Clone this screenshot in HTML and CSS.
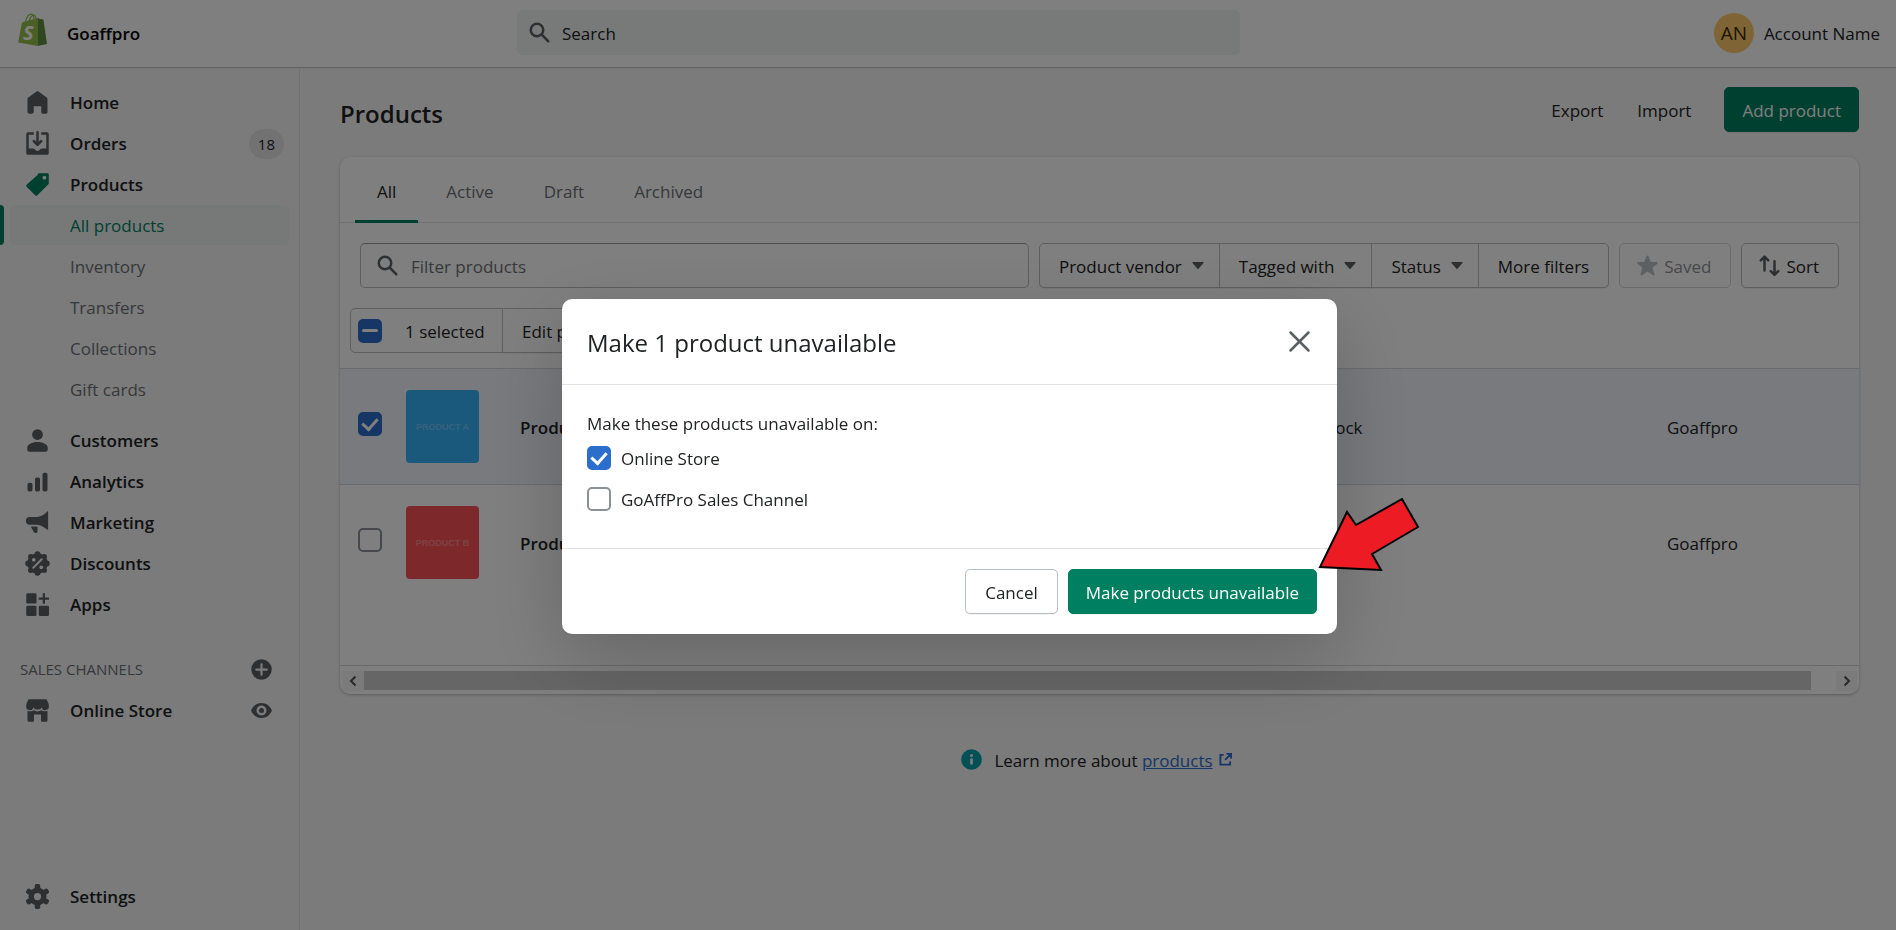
FILE: index.html
```html
<!DOCTYPE html>
<html lang="en">
<head>
<meta charset="utf-8">
<meta name="viewport" content="width=device-width, initial-scale=1">
<title>Products</title>
<link rel="stylesheet" href="styles.css">
</head>
<body>
<svg class="sprite" aria-hidden="true">
  <symbol id="i-search" viewBox="0 0 20 20"><path d="M8 12a4 4 0 110-8 4 4 0 010 8zm9.707 4.293l-4.820-4.820A5.968 5.968 0 0014 8 6 6 0 002 8a6 6 0 006 6 5.968 5.968 0 003.473-1.113l4.820 4.820a.997.997 0 001.414 0 .999.999 0 000-1.414z"/></symbol>
  <symbol id="i-caret" viewBox="0 0 12 7"><path d="M1 0h10a.6.6 0 01.5 1L6.500 6.700a.7.7 0 01-1 0L.5 1A.6.6 0 011 0z"/></symbol>
</svg>

<header class="topbar">
  <a class="brand" href="#">
    <svg class="brand-logo" viewBox="0 0 30 34" aria-hidden="true">
      <path d="M7.500 9C8.500 4.500 11 1.200 13.500 1.200S16 5 16 8M11 8.500C12 4 14.500 1.800 16 2.200s2 2.500 2 5" fill="none" stroke="#95bf47" stroke-width="1.200"/>
      <path d="M3.900 9.600L19.500 5v28L.2 29.600z" fill="#95bf47"/>
      <path d="M19.500 4.700L22 6l3.400.4L29 31l-9.500 2z" fill="#5e8e3e"/>
      <text x="5" y="27" class="brand-letter">S</text>
    </svg>
    <span>Goaffpro</span>
  </a>
  <label class="global-search">
    <svg class="icon" aria-hidden="true"><use href="#i-search"/></svg>
    <input type="search" placeholder="Search" aria-label="Search">
  </label>
  <button class="account" type="button"><span class="avatar">AN</span><span>Account Name</span></button>
</header>

<div class="frame">
  <nav class="sidebar" aria-label="Main">
    <ul class="nav">
      <li><a class="nav-link" href="#"><svg class="icon" viewBox="0 0 20 20"><path d="M18 7.261V17.500c0 .841-.672 1.500-1.500 1.500h-2c-.828 0-1.500-.659-1.500-1.500V13H7v4.477C7 18.318 6.328 19 5.500 19h-2c-.828 0-1.500-.682-1.500-1.523V7.261a1.500 1.500 0 01.615-1.210l6.590-4.820a1.481 1.481 0 011.590 0l6.590 4.820A1.500 1.500 0 0118 7.260z"/></svg>Home</a></li>
      <li><a class="nav-link" href="#"><svg class="icon" viewBox="0 0 20 20"><path d="M11 1a1 1 0 10-2 0v7.586L7.707 7.293a1 1 0 00-1.414 1.414l3 3a1 1 0 001.414 0l3-3a1 1 0 00-1.414-1.414L11 8.586V1z"/><path d="M3 14V3h4V1H2.500A1.500 1.500 0 001 2.500v15A1.500 1.500 0 002.500 19h15a1.500 1.500 0 001.500-1.500v-15A1.500 1.500 0 0017.500 1H13v2h4v11h-3.500c-.775 0-1.388.662-1.926 1.244l-.11.12A1.994 1.994 0 0110 16a1.994 1.994 0 01-1.463-.637l-.111-.12C7.888 14.664 7.275 14 6.500 14H3z"/></svg>Orders<span class="badge">18</span></a></li>
      <li><a class="nav-link nav-link-current" href="#"><svg class="icon" viewBox="0 0 20 20"><path fill-rule="evenodd" d="M10.293 1.293A1 1 0 0111 1h7a1 1 0 011 1v7a1 1 0 01-.293.707l-9 9a1 1 0 01-1.414 0l-7-7a1 1 0 010-1.414l9-8zM15.500 6a1.500 1.500 0 100-3 1.500 1.500 0 000 3z"/></svg>Products</a>
        <ul class="subnav">
          <li class="subnav-current"><a href="#" aria-current="page">All products</a></li>
          <li><a href="#">Inventory</a></li>
          <li><a href="#">Transfers</a></li>
          <li><a href="#">Collections</a></li>
          <li><a href="#">Gift cards</a></li>
        </ul>
      </li>
      <li><a class="nav-link" href="#"><svg class="icon" viewBox="0 0 20 20"><circle cx="10" cy="5.200" r="4.300"/><path d="M10 11.200c-4.500 0-8.200 2-8.200 4.600V17a2 2 0 002 2h12.400a2 2 0 002-2v-1.200c0-2.600-3.700-4.600-8.200-4.600z"/></svg>Customers</a></li>
      <li><a class="nav-link" href="#"><svg class="icon" viewBox="0 0 20 20"><rect x="2" y="11" width="4" height="7" rx="1.400"/><rect x="8" y="6.800" width="4" height="11.200" rx="1.400"/><rect x="14" y="3" width="4" height="15" rx="1.400"/></svg>Analytics</a></li>
      <li><a class="nav-link" href="#"><svg class="icon" viewBox="0 0 20 20"><path d="M18.500 1.600v13.600c0 .5-.5.700-.9.400C15 13.300 12.500 12 9.500 11.700H3.800a3.100 3.100 0 010-6.200h5.700c3-.3 5.500-1.600 8.100-4.200.4-.4.900-.2.900.3z"/><path d="M5.300 13.200h4.200c.3 0 .5.200.5.500v3.200c0 1.800-2.300 2-3 .6l-2.100-3.700c-.2-.3 0-.6.400-.6z"/></svg>Marketing</a></li>
      <li><a class="nav-link" href="#"><svg class="icon" viewBox="0 0 20 20"><circle cx="10" cy="10" r="8.200"/><circle cx="10" cy="2.600" r="2.400"/><circle cx="10" cy="17.400" r="2.400"/><circle cx="2.600" cy="10" r="2.400"/><circle cx="17.400" cy="10" r="2.400"/><circle cx="4.600" cy="4.600" r="2.200"/><circle cx="15.400" cy="4.600" r="2.200"/><circle cx="4.600" cy="15.400" r="2.200"/><circle cx="15.400" cy="15.400" r="2.200"/><g class="knockout"><circle cx="7" cy="7" r="1.500"/><circle cx="13" cy="13" r="1.500"/><path d="M13.400 6.600l-6.800 6.800" stroke-width="1.600" stroke-linecap="round"/></g></svg>Discounts</a></li>
      <li><a class="nav-link" href="#"><svg class="icon" viewBox="0 0 20 20"><rect x="1" y="1" width="8.200" height="8.200" rx="1"/><rect x="1" y="11" width="8.200" height="8.200" rx="1"/><rect x="11" y="11" width="8.200" height="8.200" rx="1"/><path d="M14.200 1h1.800v3.300h3.200v1.800H16v3.200h-1.800V6.100H11V4.300h3.200z"/></svg>Apps</a></li>
    </ul>
    <div class="nav-heading"><h2>Sales channels</h2><button class="icon-button" type="button" aria-label="Add sales channel"><svg class="icon" viewBox="0 0 20 20"><circle cx="10" cy="10" r="8.200"/><path class="knockout" d="M10 5.800v8.400M5.800 10h8.400" stroke-width="1.800" stroke-linecap="round"/></svg></button></div>
    <div class="channel">
      <a class="nav-link" href="#"><svg class="icon" viewBox="0 0 20 20"><path d="M3.400 1h13.200c.4 0 .7.200.9.500L19 5v1.200a2.900 2.900 0 01-5.700 1.200A2.900 2.900 0 0110 9.200a2.900 2.900 0 01-3.300-1.800A2.900 2.900 0 011 6.200V5l1.500-3.500c.2-.3.5-.5.9-.5z"/><path d="M2 10.200c2 .8 4 .5 5-.4 1.700 1.200 4.300 1.200 6 0 1.200.9 3 1.200 5 .4v7.600a1.200 1.200 0 01-1.200 1.200h-3a1 1 0 01-1-1v-4.800H7.200V18a1 1 0 01-1 1h-3A1.200 1.200 0 012 17.800z"/></svg>Online Store</a>
      <button class="icon-button" type="button" aria-label="View your online store"><svg class="icon" viewBox="0 0 20 20"><path d="M18 9.200C16.600 6.200 13.600 4 10 4S3.400 6.200 2 9.200a1.500 1.500 0 000 1.600C3.400 13.800 6.400 16 10 16s6.600-2.200 8-5.200a1.500 1.500 0 000-1.600z"/><circle class="knockout" cx="10" cy="10" r="4"/><circle cx="10" cy="10" r="2"/></svg></button>
    </div>
    <a class="nav-link nav-settings" href="#"><svg class="icon" viewBox="0 0 20 20"><circle cx="10" cy="10" r="7.200"/><rect x="7.800" y="0" width="4.400" height="20" rx="1.400"/><rect x="7.800" y="0" width="4.400" height="20" rx="1.400" transform="rotate(60 10 10)"/><rect x="7.800" y="0" width="4.400" height="20" rx="1.400" transform="rotate(120 10 10)"/><circle class="knockout" cx="10" cy="10" r="2.900"/></svg>Settings</a>
  </nav>

  <main class="main">
    <div class="page-head">
      <h1>Products</h1>
      <div class="page-actions">
        <button class="button button-plain" type="button">Export</button>
        <button class="button button-plain" type="button">Import</button>
        <button class="button button-primary" type="button">Add product</button>
      </div>
    </div>

    <section class="card">
      <div class="tabs" role="tablist">
        <button class="tab tab-current" type="button" role="tab" aria-selected="true">All</button>
        <button class="tab" type="button" role="tab">Active</button>
        <button class="tab" type="button" role="tab">Draft</button>
        <button class="tab" type="button" role="tab">Archived</button>
      </div>
      <div class="filters">
        <label class="filter-field">
          <svg class="icon" aria-hidden="true"><use href="#i-search"/></svg>
          <input type="text" placeholder="Filter products" aria-label="Filter products">
        </label>
        <div class="button-group">
          <button class="button" type="button">Product vendor<svg class="caret"><use href="#i-caret"/></svg></button>
          <button class="button" type="button">Tagged with<svg class="caret"><use href="#i-caret"/></svg></button>
          <button class="button" type="button">Status<svg class="caret"><use href="#i-caret"/></svg></button>
          <button class="button" type="button">More filters</button>
        </div>
        <button class="button button-icon" type="button" disabled><svg class="icon" viewBox="0 0 20 20"><path d="M10 1.900c.3 0 .6.200.7.500l1.900 4.700h4.800c.8 0 1.100.9.500 1.400l-3.900 3.200 1.600 5.300c.2.700-.5 1.200-1.100.8L10 14.800l-4.500 3c-.6.400-1.300-.1-1.100-.8L6 11.700 2.100 8.500c-.6-.5-.3-1.400.5-1.400h4.800l1.900-4.700c.1-.3.4-.5.7-.5z"/></svg>Saved</button>
        <button class="button button-icon" type="button"><svg class="icon icon-sort" viewBox="0 0 20 20"><path d="M6 14V3.200M3 5.900l3-3 3 3M14 6.500v10.800M11 14.500l3 3 3-3"/></svg>Sort</button>
      </div>
      <div class="bulk">
        <label class="bulk-count"><input class="check check-mixed" type="checkbox" checked><span>1 selected</span></label>
        <button class="button bulk-edit" type="button">Edit products</button>
      </div>
      <table class="products">
        <colgroup><col class="col-check"><col class="col-thumb"><col class="col-name"><col class="col-stock"><col class="col-vendor"></colgroup>
        <tbody>
          <tr class="row-selected">
            <td><input class="check" type="checkbox" checked aria-label="Select Product A"></td>
            <td><div class="thumb thumb-a">PRODUCT A</div></td>
            <th scope="row">Product A</th>
            <td>20 in stock</td>
            <td>Goaffpro</td>
          </tr>
          <tr>
            <td><input class="check" type="checkbox" aria-label="Select Product B"></td>
            <td><div class="thumb thumb-b">PRODUCT B</div></td>
            <th scope="row">Product B</th>
            <td></td>
            <td>Goaffpro</td>
          </tr>
        </tbody>
      </table>
      <div class="scroller" aria-hidden="true">
        <svg class="scroll-arrow" viewBox="0 0 20 20"><path d="M12 5.500L7.500 10l4.500 4.500"/></svg>
        <div class="scroll-track"><div class="scroll-thumb"></div></div>
        <svg class="scroll-arrow" viewBox="0 0 20 20"><path d="M8 5.500l4.500 4.500L8 14.500"/></svg>
      </div>
    </section>

    <p class="help">
      <svg class="icon icon-info" viewBox="0 0 20 20"><circle cx="10" cy="10" r="8.200"/><circle class="knockout" cx="10" cy="6.800" r="1.200"/><rect class="knockout" x="8.900" y="9" width="2.200" height="5.200" rx="1"/></svg>
      <span>Learn more about <a href="#">products</a></span>
      <svg class="icon-external" viewBox="0 0 14 14"><path d="M5 2H1.500v10.500H12V9M8 1h5v5M13 1L6.500 7.500"/></svg>
    </p>
  </main>
</div>

<div class="overlay">
  <div class="modal" role="dialog" aria-modal="true" aria-labelledby="modal-title">
    <div class="modal-head">
      <h2 id="modal-title">Make 1 product unavailable</h2>
      <button class="icon-button" type="button" aria-label="Close"><svg class="icon icon-close" viewBox="0 0 20 20"><path d="M2.800 2.800l14.400 14.400M17.200 2.800L2.800 17.200"/></svg></button>
    </div>
    <div class="modal-body">
      <p>Make these products unavailable on:</p>
      <label class="choice"><input class="check" type="checkbox" checked><span>Online Store</span></label>
      <label class="choice"><input class="check" type="checkbox"><span>GoAffPro Sales Channel</span></label>
    </div>
    <div class="modal-foot">
      <button class="button" type="button">Cancel</button>
      <button class="button button-primary" type="button">Make products unavailable</button>
      <svg class="pointer" viewBox="0 0 104 76" aria-hidden="true"><path d="M85 3l16 28-46 27 9 16-61-3L30 16l9 13z"/></svg>
    </div>
  </div>
</div>
</body>
</html>
```

FILE: styles.css
```css
* { box-sizing: border-box; }

body {
  margin: 0;
  min-height: 100vh;
  display: flex;
  flex-direction: column;
  background: #f6f6f7;
  color: #202223;
  font: 400 17px/25px "Open Sans", "Noto Sans", sans-serif;
}

h1, h2, p, ul { margin: 0; padding: 0; }
ul { list-style: none; }
a { color: inherit; text-decoration: none; }
button, input { font: inherit; color: inherit; }
button { cursor: pointer; }

.sprite { display: none; }
.icon { width: 25px; height: 25px; flex: none; fill: #5c5f62; }
.knockout { fill: #f6f6f7; stroke: #f6f6f7; }
circle.knockout, rect.knockout, .knockout circle { stroke: none; }

.icon-button {
  display: flex;
  padding: 0;
  border: 0;
  background: none;
}

/* Top bar */
.topbar {
  display: grid;
  grid-template-columns: minmax(160px, 499px) minmax(0, 723px) 1fr;
  align-items: center;
  height: 67px;
  padding: 0 16px 0 18px;
  background: #fff;
  box-shadow: 0 1px 1px #c9cccf;
  position: relative;
}
.brand {
  display: flex;
  align-items: center;
  gap: 19px;
  font-weight: 600;
  color: #000;
}
.brand-logo { width: 30px; height: 34px; margin-bottom: 8px; }
.brand-letter { font: italic 700 20px "Open Sans", sans-serif; fill: #fff; }
.global-search {
  display: flex;
  align-items: center;
  gap: 10px;
  height: 45px;
  margin-bottom: 2px;
  padding: 0 10px;
  border-radius: 5px;
  background: #f1f5f4;
}
.global-search input, .filter-field input {
  flex: 1;
  min-width: 0;
  padding: 2px 0 0;
  border: 0;
  outline: 0;
  background: none;
}
.global-search input::placeholder { color: #202223; opacity: 1; }
.account {
  display: flex;
  align-items: center;
  gap: 10px;
  justify-self: end;
  padding: 0;
  border: 0;
  background: none;
  white-space: nowrap;
}
.avatar {
  width: 40px;
  height: 40px;
  margin-bottom: 2px;
  border-radius: 50%;
  background: #ffc96b;
  color: #3d2800;
  font-size: 19px;
  line-height: 40px;
}

/* Sidebar */
.frame { flex: 1; display: flex; }
.sidebar {
  width: 300px;
  flex: none;
  display: flex;
  flex-direction: column;
  padding: 15px 0 13px;
  border-right: 1px solid #e1e3e5;
}
.nav-link {
  display: flex;
  align-items: center;
  gap: 20px;
  height: 41px;
  padding: 0 15px 0 25px;
  font-weight: 600;
}
.nav-link-current .icon { fill: #008060; }
.badge {
  margin-left: auto;
  padding: 0 9px;
  border-radius: 15px;
  background: #e4e5e7;
  font-size: 15px;
  font-weight: 400;
  line-height: 30px;
}
.subnav { margin-bottom: 10px; }
.subnav li { display: flex; height: 41px; padding: 0 10px 1px; }
.subnav a {
  flex: 1;
  padding-left: 60px;
  border-radius: 5px;
  color: #6d7175;
  line-height: 42px;
}
.subnav .subnav-current { padding-left: 0; }
.subnav-current::before {
  content: "";
  width: 4px;
  margin-right: 6px;
  border-radius: 0 5px 5px 0;
  background: #008060;
}
.subnav .subnav-current a { background: #edf2f1; color: #008060; }
.nav-heading {
  display: flex;
  align-items: center;
  justify-content: space-between;
  height: 41px;
  margin-top: 24px;
  padding: 0 25px 0 20px;
}
.nav-heading h2 {
  color: #6d7175;
  font-size: 15px;
  font-weight: 400;
  text-transform: uppercase;
}
.channel { display: flex; align-items: center; justify-content: space-between; padding-right: 25px; }
.nav-settings { margin-top: auto; }

/* Page */
.main { flex: 1; min-width: 0; padding: 20px 37px 0 40px; }
.page-head { display: flex; align-items: center; justify-content: space-between; margin-bottom: 25px; }
.page-head h1 { padding-top: 8px; font-size: 24px; font-weight: 600; line-height: 35px; }
.page-actions { display: flex; align-items: center; }
.button {
  display: flex;
  align-items: center;
  justify-content: center;
  height: 45px;
  padding: 2px 19px 0;
  border: 1px solid #babfc3;
  border-radius: 5px;
  background: #fff;
  white-space: nowrap;
  box-shadow: 0 1px 0 rgba(0, 0, 0, .05);
}
.button-plain { padding: 2px 16px 0; border-color: transparent; background: none; box-shadow: none; }
.button-primary { padding: 2px 17px 0; border-color: #008060; background: #008060; color: #fff; }
.page-actions .button-primary { margin-left: 16px; }
.card {
  border-radius: 10px;
  background: #fff;
  box-shadow: 0 1px 3px rgba(0, 0, 0, .25);
}
.tabs {
  display: flex;
  gap: 6px;
  height: 66px;
  padding: 0 15px;
  border-bottom: 1px solid #e1e3e5;
}
.tab {
  height: 66px;
  padding: 6px 22px 0;
  border: 0;
  border-bottom: 3px solid transparent;
  background: none;
  color: #6d7175;
}
.tab-current { border-bottom-color: #008060; color: #202223; }
.filters { display: flex; gap: 10px; padding: 20px 20px 0; }
.filter-field {
  flex: 1;
  min-width: 0;
  display: flex;
  align-items: center;
  gap: 11px;
  height: 45px;
  padding: 0 14px;
  border: 1px solid #babfc3;
  border-top-color: #999ea4;
  border-radius: 5px;
}
.filter-field input::placeholder { color: #6d7175; opacity: 1; }
.button-group { display: flex; }
.button-group .button { margin-right: -1px; border-radius: 0; }
.button-group .button:first-child { border-radius: 5px 0 0 5px; }
.button-group .button:last-child { margin-right: 0; border-radius: 0 5px 5px 0; }
.caret { width: 12px; height: 7px; margin: 0 -4px 2px 10px; fill: #5c5f62; }
.button-icon { gap: 4px; padding: 2px 19px 0 15px; }
.button-icon .icon { margin-bottom: 2px; }
.button:disabled { border-color: #d2d5d8; color: #8c9196; box-shadow: none; }
.button:disabled .icon { fill: #babec3; }
.icon-sort, .icon-close {
  fill: none;
  stroke: #5c5f62;
  stroke-width: 2;
  stroke-linecap: round;
  stroke-linejoin: round;
}
.bulk { display: flex; padding: 20px 10px 15px; }
.bulk-count {
  display: flex;
  align-items: center;
  gap: 23px;
  width: 153px;
  height: 45px;
  padding-left: 7px;
  border: 1px solid #babfc3;
  border-radius: 5px 0 0 5px;
  white-space: nowrap;
}
.bulk-count span { padding-top: 2px; }
.bulk-edit { margin-left: -1px; border-radius: 0 5px 5px 0; }

.check {
  appearance: none;
  width: 24px;
  height: 24px;
  flex: none;
  display: grid;
  place-items: center;
  margin: 0;
  border: 2px solid #8c9196;
  border-radius: 5px;
  background: #fff;
}
.check:checked { border-color: #2c6ecb; background: #2c6ecb; }
.check:checked::before {
  content: "";
  width: 7px;
  height: 12px;
  margin-bottom: 4px;
  border: solid #fff;
  border-width: 0 3px 3px 0;
  transform: rotate(42deg);
}
.check.check-mixed::before {
  width: 16px;
  height: 3px;
  margin: 0;
  border: 0;
  border-radius: 2px;
  background: #fff;
  transform: none;
}

.products { width: 100%; table-layout: fixed; border-collapse: collapse; }
.col-check { width: 66px; }
.col-thumb { width: 114px; }
.col-stock { width: 389px; }
.col-vendor { width: 192px; }
.products tr { height: 116px; border-top: 1px solid #d2d5d8; vertical-align: top; }
.products tr:last-child { height: 181px; border-bottom: 1px solid #d2d5d8; }
.products td, .products th { padding: 46px 0 0; text-align: left; }
.products th { font-weight: 600; }
.products td:first-child { padding: 43px 0 0 18px; }
.products td:nth-child(2) { padding-top: 21px; }
.row-selected { background: #f2f5fd; }
.thumb {
  width: 73px;
  height: 73px;
  border-radius: 4px;
  color: rgba(255, 255, 255, .3);
  font: 700 9px/75px "Liberation Sans", sans-serif;
  text-align: center;
}
.thumb-a { background: #34b0f8; }
.thumb-b { background: #fa5257; }
.scroller { display: flex; align-items: center; height: 28px; padding: 1px 2px 0 3px; }
.scroll-arrow { width: 21px; height: 20px; background: #f6f6f7; fill: none; stroke: #505050; stroke-width: 2; }
.scroll-track { flex: 1; height: 20px; }
.scroll-thumb { width: calc(100% - 25px); height: 19px; background: #cdcdcd; }

.help { display: flex; align-items: center; justify-content: center; margin-top: 53px; }
.icon-info { margin: 0 10px 2px 0; fill: #00a0ac; }
.help a { color: #2c6ecb; text-decoration: underline; }
.icon-external { width: 13px; height: 13px; margin: 0 8px 3px 6px; fill: none; stroke: #2c6ecb; stroke-width: 2; }

/* Dialog */
.overlay {
  position: fixed;
  inset: 0;
  display: flex;
  align-items: center;
  justify-content: center;
  padding: 2px 0 0 3px;
  background: rgba(0, 0, 0, .5);
}
.modal {
  width: 775px;
  max-width: 100%;
  border-radius: 10px;
  background: #fff;
  box-shadow: 0 26px 80px rgba(0, 0, 0, .2), 0 0 1px rgba(0, 0, 0, .2);
}
.modal-head {
  display: flex;
  align-items: center;
  justify-content: space-between;
  height: 86px;
  padding: 0 25px;
  border-bottom: 1px solid #e1e3e5;
}
.modal-head h2 { padding-top: 3px; font-size: 24px; font-weight: 400; line-height: 35px; }
.modal-body { padding: 26px 25px 28px; }
.modal-body p { margin-bottom: 2px; }
.choice { display: flex; align-items: center; gap: 10px; width: max-content; height: 41px; }
.modal-foot {
  position: relative;
  display: flex;
  justify-content: flex-end;
  gap: 10px;
  padding: 20px;
  border-top: 1px solid #e1e3e5;
}
.pointer {
  position: absolute;
  right: -84px;
  top: -53px;
  width: 104px;
  height: 76px;
  fill: #ed1c24;
  stroke: #000;
  stroke-width: 2;
}
```
